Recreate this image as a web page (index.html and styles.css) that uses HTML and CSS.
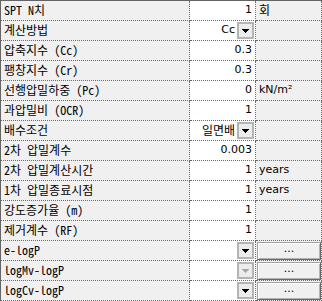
FILE: index.html
```html
<!DOCTYPE html>
<html>
<head>
<meta charset="utf-8">
<link rel="stylesheet" href="styles.css">
</head>
<body>
<div class="grid">
  <div class="lbl">SPT N치</div><div class="val num">1</div><div class="unit kr">회</div>

  <div class="lbl">계산방법</div>
  <div class="val combo"><span class="ctext">Cc</span><span class="dd"><svg width="7" height="4" viewBox="0 0 7 4" shape-rendering="crispEdges"><path d="M0 0h7v1h-1v1h-1v1h-1v1h-1v-1h-1v-1h-1v-1h-1z"/></svg></span></div>
  <div class="unit"></div>

  <div class="lbl">압축지수 (Cc)</div><div class="val num">0.3</div><div class="unit"></div>
  <div class="lbl">팽창지수 (Cr)</div><div class="val num">0.3</div><div class="unit"></div>
  <div class="lbl">선행압밀하중 (Pc)</div><div class="val num">0</div><div class="unit">kN/m²</div>
  <div class="lbl">과압밀비 (OCR)</div><div class="val num">1</div><div class="unit"></div>

  <div class="lbl">배수조건</div>
  <div class="val combo"><span class="ctext kr">일면배</span><span class="dd"><svg width="7" height="4" viewBox="0 0 7 4" shape-rendering="crispEdges"><path d="M0 0h7v1h-1v1h-1v1h-1v1h-1v-1h-1v-1h-1v-1h-1z"/></svg></span></div>
  <div class="unit"></div>

  <div class="lbl">2차 압밀계수</div><div class="val num">0.003</div><div class="unit"></div>
  <div class="lbl">2차 압밀계산시간</div><div class="val num">1</div><div class="unit">years</div>
  <div class="lbl">1차 압밀종료시점</div><div class="val num">1</div><div class="unit">years</div>
  <div class="lbl">강도증가율 (m)</div><div class="val num">1</div><div class="unit"></div>
  <div class="lbl">제거계수 (RF)</div><div class="val num">1</div><div class="unit"></div>

  <div class="lbl">e-logP</div>
  <div class="val combo"><span class="dd"><svg width="7" height="4" viewBox="0 0 7 4" shape-rendering="crispEdges"><path d="M0 0h7v1h-1v1h-1v1h-1v1h-1v-1h-1v-1h-1v-1h-1z"/></svg></span></div>
  <div class="unit btncell"><span class="ell">...</span></div>

  <div class="lbl">logMv-logP</div>
  <div class="val combo"><span class="dd disabled"><svg width="7" height="4" viewBox="0 0 7 4" shape-rendering="crispEdges"><path d="M0 0h7v1h-1v1h-1v1h-1v1h-1v-1h-1v-1h-1v-1h-1z"/></svg></span></div>
  <div class="unit btncell"><span class="ell">...</span></div>

  <div class="lbl">logCv-logP</div>
  <div class="val combo"><span class="dd"><svg width="7" height="4" viewBox="0 0 7 4" shape-rendering="crispEdges"><path d="M0 0h7v1h-1v1h-1v1h-1v1h-1v-1h-1v-1h-1v-1h-1z"/></svg></span></div>
  <div class="unit btncell"><span class="ell">...</span></div>
</div>
</body>
</html>
```

FILE: styles.css
```css
html, body {
  margin: 0;
  padding: 0;
  background: #ffffff;
  overflow: hidden;
}

.grid {
  display: grid;
  grid-template-columns: 189px 66px 66px;
  grid-auto-rows: 20px;
  width: 321px;
  border-top: 1px solid #646464;
  border-left: 1px solid #646464;
  font-family: "DejaVu Sans", "Noto Sans CJK KR", sans-serif;
  font-size: 11px;
  color: #000000;
}

.grid > div {
  box-sizing: border-box;
  border-right: 1px dotted #6a6a6a;
  border-bottom: 1px dotted #6a6a6a;
  line-height: 17px;
  white-space: nowrap;
  overflow: hidden;
}

.lbl {
  background: #f0f0f0;
  padding-left: 3px;
  font-family: "Noto Sans Mono CJK KR", "Noto Sans CJK KR", sans-serif;
  font-size: 12px;
}

.val {
  background: #ffffff;
}

.num {
  text-align: right;
  padding-right: 3px;
}

.combo {
  display: flex;
  justify-content: flex-end;
  align-items: flex-start;
  gap: 2px;
  padding-right: 1px;
}

.kr {
  font-family: "Noto Sans Mono CJK KR", "Noto Sans CJK KR", sans-serif;
  font-size: 12px;
}

.dd {
  box-sizing: border-box;
  width: 17px;
  height: 17px;
  margin-top: 1px;
  border: 2px solid #b4b4b4;
  background: #ececec;
  display: flex;
  align-items: center;
  justify-content: center;
}

.dd svg {
  display: block;
  fill: #000000;
}

.dd.disabled svg {
  fill: #a8a8a8;
}

.unit {
  background: #f0f0f0;
  padding-left: 3px;
}

.btncell {
  padding: 1px 0 0 1px;
}

.ell {
  box-sizing: border-box;
  display: block;
  width: 64px;
  height: 18px;
  border: 1px solid;
  border-color: #a0a0a0 #696969 #696969 #a0a0a0;
  box-shadow: inset 1px 1px #ffffff, inset -1px -1px #b4b4b4;
  background: #f0f0f0;
  text-align: center;
  line-height: 12px;
  font-size: 11px;
}
```
